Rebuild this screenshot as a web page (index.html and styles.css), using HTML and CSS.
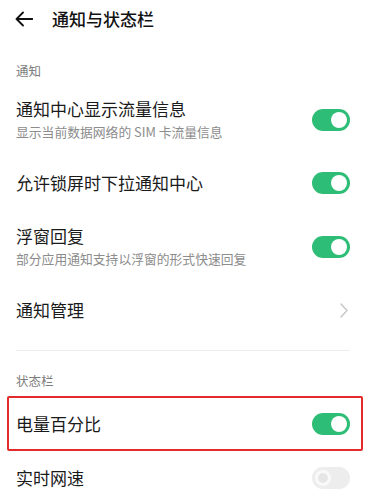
FILE: index.html
```html
<!DOCTYPE html>
<html lang="zh-CN">
<head>
<meta charset="utf-8">
<link rel="stylesheet" href="styles.css">
</head>
<body>
<div class="page">
  <header class="header">
    <svg class="back" width="18" height="16" viewBox="0 0 18 16">
      <path d="M17.5 8H1.5M8 1.5L1.5 8L8 14.5" fill="none" stroke="#111" stroke-width="1.8" stroke-linecap="round" stroke-linejoin="round"/>
    </svg>
    <h1 class="title">通知与状态栏</h1>
  </header>

  <div class="section-label first">通知</div>

  <div class="row">
    <div class="text">
      <div class="row-title">通知中心显示流量信息</div>
      <div class="row-sub">显示当前数据网络的 SIM 卡流量信息</div>
    </div>
    <span class="switch on"><span class="knob"></span></span>
  </div>

  <div class="row">
    <div class="text">
      <div class="row-title">允许锁屏时下拉通知中心</div>
    </div>
    <span class="switch on"><span class="knob"></span></span>
  </div>

  <div class="row">
    <div class="text">
      <div class="row-title">浮窗回复</div>
      <div class="row-sub">部分应用通知支持以浮窗的形式快速回复</div>
    </div>
    <span class="switch on"><span class="knob"></span></span>
  </div>

  <div class="row">
    <div class="text">
      <div class="row-title">通知管理</div>
    </div>
    <svg class="chevron" width="8" height="15" viewBox="0 0 8 15">
      <path d="M1 1L7 7.5L1 14" fill="none" stroke="#c6c6c6" stroke-width="1.4" stroke-linecap="round" stroke-linejoin="round"/>
    </svg>
  </div>

  <div class="divider"></div>

  <div class="section-label second">状态栏</div>

  <div class="highlight">
    <div class="row boxed">
      <div class="text">
        <div class="row-title">电量百分比</div>
      </div>
      <span class="switch on"><span class="knob"></span></span>
    </div>
  </div>

  <div class="row last">
    <div class="text">
      <div class="row-title">实时网速</div>
    </div>
    <span class="switch off"><span class="knob"></span></span>
  </div>
</div>
</body>
</html>
```

FILE: styles.css
```css
* { box-sizing: border-box; }
html, body {
  margin: 0;
  padding: 0;
  background: #fff;
}
body {
  font-family: "Noto Sans CJK SC", "Noto Sans", sans-serif;
  color: #1a1a1a;
  width: 369px;
  height: 501px;
  overflow: hidden;
}
.page {
  display: flex;
  flex-direction: column;
}
.header {
  height: 38px;
  display: flex;
  align-items: center;
  padding-left: 15px;
}
.back {
  display: block;
  flex: none;
}
.title {
  margin: 0 0 0 19px;
  font-size: 17px;
  line-height: 24px;
  font-weight: 500;
  color: #111;
}
.section-label {
  font-size: 12.5px;
  line-height: 18px;
  color: #7d7d7d;
  padding-left: 16px;
}
.section-label.first {
  margin-top: 24px;
  margin-bottom: 2.5px;
}
.section-label.second {
  margin-top: 21px;
}
.row {
  display: flex;
  align-items: center;
  justify-content: space-between;
  padding: 15.5px 19px 15.5px 16px;
}
.text {
  display: flex;
  flex-direction: column;
  gap: 3px;
}
.row-title {
  font-size: 17px;
  line-height: 22px;
  color: #1a1a1a;
}
.row-sub {
  font-size: 12.8px;
  line-height: 18px;
  color: #8c8c8c;
}
.switch {
  position: relative;
  flex: none;
  width: 38px;
  height: 22px;
  border-radius: 11px;
}
.switch.on { background: #2ebd76; }
.switch .knob {
  position: absolute;
  top: 3px;
  width: 16px;
  height: 16px;
  border-radius: 50%;
}
.switch.on .knob {
  right: 3px;
  background: #fff;
}
.switch.off { background: #ededed; }
.switch.off .knob {
  left: 3px;
  background: #e6e6e6;
  border: 3px solid #f9f9f9;
}
.chevron {
  display: block;
  flex: none;
  margin-right: 2px;
}
.divider {
  margin: 13.5px 19px 0 16px;
  height: 1px;
  background: #ededed;
}
.highlight {
  margin: 6px 6px 0 7px;
  border: 2px solid #e32b2b;
  border-radius: 2px;
}
.row.boxed {
  padding: 14.5px 11px 14.5px 7px;
}
.row.last {
  padding-top: 16px;
}
```
